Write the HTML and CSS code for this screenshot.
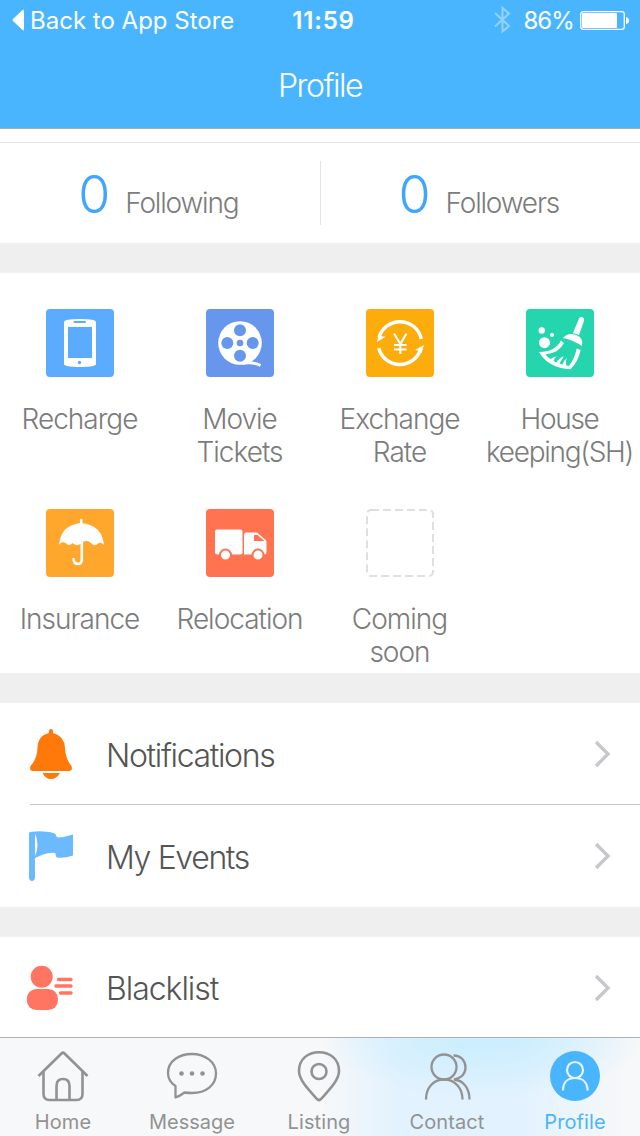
FILE: index.html
```html
<!DOCTYPE html>
<html lang="en">
<head>
    <meta charset="utf-8" />
    <title>Profile</title>
    <link rel="stylesheet" href="styles.css">
</head>
<body>
    <div class="screen">
        <header class="header">
            <div class="statusbar">
                <div class="back">
                    <svg width="13" height="22" viewBox="0 0 13 22"><path d="M11 0.5 Q12 0.5 12 2 V20 Q12 21.500 11 21.500 L1 12 Q0 11 1 10z" fill="#fff"/></svg>
                    <span>Back to App Store</span>
                </div>
                <div class="clock">11:59</div>
                <div class="power">
                    <svg width="17" height="28" viewBox="0 0 17 28"><path d="M1 7 L15 20 L8.500 25.500 V2 L15 7.500 L1 20.500" fill="none" stroke="#94d2ff" stroke-width="2"/></svg>
                    <span>86%</span>
                    <svg width="50" height="19" viewBox="0 0 50 19"><rect x="0.700" y="0.700" width="43.600" height="17.600" rx="2.500" fill="none" stroke="#fff" stroke-width="1.300"/><rect x="2" y="2" width="35" height="15" rx="1" fill="#fff"/><path d="M46 6 Q49 6.500 49 9.500 T46 13z" fill="#fff"/></svg>
                </div>
            </div>
            <h1 class="title">Profile</h1>
        </header>

        <!-- following / followers -->
        <section class="stats">
            <div class="stat"><span class="num">0</span><span class="statname">Following</span></div>
            <div class="stat"><span class="num">0</span><span class="statname">Followers</span></div>
        </section>

        <!-- services -->
        <section class="services">
            <div class="service">
                <svg class="tile blue" viewBox="0 0 68 68">
                    <path d="M18 13 Q18 10 34 10 T50 13 V55 Q50 58 34 58 T18 55z" fill="#fff"/>
                    <rect x="22" y="18" width="24" height="31" fill="#5babff"/>
                    <rect x="27.500" y="12" width="12.500" height="2" rx="1" fill="#5babff"/>
                    <circle cx="33.500" cy="53.500" r="1.700" fill="#5babff"/>
                </svg>
                <p>Recharge</p>
            </div>
            <div class="service">
                <svg class="tile indigo" viewBox="0 0 68 68">
                    <circle cx="34" cy="34" r="21.800" fill="#fff"/>
                    <path d="M36 54.300 Q47 52.500 54.500 56.500" fill="none" stroke="#fff" stroke-width="3"/>
                    <g fill="#6797ed"><circle cx="34" cy="21.300" r="6"/><circle cx="34" cy="46.700" r="6"/><circle cx="21.300" cy="34" r="6"/><circle cx="46.700" cy="34" r="6"/><circle cx="34" cy="34" r="3.300"/></g>
                </svg>
                <p>Movie<br>Tickets</p>
            </div>
            <div class="service">
                <svg class="tile yellow" viewBox="0 0 68 68">
                    <g fill="none" stroke="#fff" stroke-width="3.400"><path d="M13 28.500 A21.800 21.800 0 0 1 55.300 30"/><path d="M12.700 39 A21.800 21.800 0 0 0 55 39"/></g>
                    <path d="M13 24 L14.500 27 L19.500 27.700 L11 33z M58 36 L49 41 L53.500 42 L55 45z" fill="#fff"/>
                    <path d="M28 24.500 L34.300 35 L40.500 24.500 M34.300 34 V45 M28 36 H40.500 M28 40.500 H40.500" fill="none" stroke="#fff" stroke-width="2.100"/>
                </svg>
                <p>Exchange<br>Rate</p>
            </div>
            <div class="service">
                <svg class="tile green" viewBox="0 0 68 68">
                    <g fill="#fff">
                        <circle cx="15.700" cy="21.500" r="3.200"/><circle cx="26" cy="26" r="2.100"/><circle cx="18.500" cy="33.700" r="5.500"/>
                        <path d="M47 24 L53 9.500 Q55 7 57.500 9 Q58.500 10 58 12 L53 26z"/>
                        <path d="M37 29 Q42 23 50 26 T56 37 Q47 31 37 29z"/>
                        <path d="M35 31.500 Q29 43 13 43 Q22 59 44.500 60.300 Q52 53 54.700 41 L50.700 39.500 Q48.500 50 43 57 L40.500 56.500 Q39 53 41 49 Q38 51 36.500 55.500 L33.500 54.500 Q35 52 38 47 Q32 50 30.500 53.500 L27.500 52 Q28 50 30.500 47.500 Q27 48 24.500 50 Q21.500 48 19.500 45.500 Q33 44 38 34z"/>
                    </g>
                </svg>
                <p class="keeping">House<br>keeping(SH)</p>
            </div>
            <div class="service">
                <svg class="tile orange" viewBox="0 0 68 68">
                    <path d="M13 36 Q14.500 16 35.200 14 Q56 16 58 36 Q55 32 51.500 35 Q48.500 38 45 34 Q40 30 35.200 34.500 Q30 38 26.500 34 Q23 38 19.500 34 Q15 32 13 36z" fill="#fff"/>
                    <path d="M35.200 11 V16 M35.800 32 V51 Q35.500 55 32 55 Q28 55 27.500 50" fill="none" stroke="#fff" stroke-width="2.600" stroke-linecap="round"/>
                </svg>
                <p>Insurance</p>
            </div>
            <div class="service">
                <svg class="tile red" viewBox="0 0 68 68">
                    <rect x="9" y="20.500" width="27.500" height="25" rx="2" fill="#fff"/>
                    <path d="M38 26 Q38 23.500 40 23.500 H51 L58.500 30 Q60.500 31 60.500 33 V43 Q60.500 45.500 58 45.500 H38z" fill="#fff"/>
                    <path d="M48 26 H51.500 L58.500 32 H48z" fill="#ff7350"/>
                    <g fill="#fff" stroke="#ff7350" stroke-width="2"><circle cx="19.500" cy="46" r="5.500"/><circle cx="52" cy="46" r="5.500"/></g>
                </svg>
                <p>Relocation</p>
            </div>
            <div class="service">
                <svg class="tile" viewBox="0 0 68 68"><rect x="1" y="1" width="66" height="66" rx="4" fill="none" stroke="#dfdfdf" stroke-width="2" stroke-dasharray="8 4"/></svg>
                <p>Coming<br>soon</p>
            </div>
        </section>

        <section class="list">
            <div class="row">
                <svg class="rowicon" width="50" height="52" viewBox="0 0 50 52">
                    <path d="M23 5 V3 Q23 1 25 1 T27 3 V5 Q38.500 8 39 20 Q39.500 31 45.500 38 Q47 43 43.500 43 H6.500 Q3 43 4.500 38 Q11 31 11.500 20 Q11.500 8 23 5z M16.500 45 H34 Q30.500 51 25 51 T16.500 45z" fill="#ff780a"/>
                </svg>
                <span>Notifications</span>
                <svg class="arrow" width="18" height="28" viewBox="0 0 18 28"><path d="M2 2 L14 14 L2 26" fill="none" stroke="#c7c7cc" stroke-width="3.400"/></svg>
            </div>
            <div class="row divided">
                <svg class="rowicon" width="50" height="52" viewBox="0 0 50 52">
                    <path d="M3 3 Q3 1.200 14 1.200 Q28 2 29.500 4 Q30 7.500 33 7.500 Q39 7 47 4.500 V25.500 Q38 28.500 31 27.500 Q29.500 27 29.500 23 Q21 22 9 28 V48 Q8.500 51 6 51 T3 48z" fill="#6bbaff"/>
                    <path d="M9 3.500 Q14 15 9 26z" fill="#fff"/>
                </svg>
                <span>My Events</span>
                <svg class="arrow" width="18" height="28" viewBox="0 0 18 28"><path d="M2 2 L14 14 L2 26" fill="none" stroke="#c7c7cc" stroke-width="3.400"/></svg>
            </div>
        </section>

        <section class="list last">
            <div class="row">
                <svg class="rowicon" width="50" height="52" viewBox="0 0 50 52">
                    <g fill="#ff7562"><circle cx="15.700" cy="14.700" r="11"/><rect x="0.900" y="27" width="31" height="21" rx="9.500"/></g>
                    <path d="M32.500 17.500 H45 M30 24 H45 M34.500 31 H45" stroke="#ff7562" stroke-width="3.400" stroke-linecap="round"/>
                </svg>
                <span class="black">Blacklist</span>
                <svg class="arrow" width="18" height="28" viewBox="0 0 18 28"><path d="M2 2 L14 14 L2 26" fill="none" stroke="#c7c7cc" stroke-width="3.400"/></svg>
            </div>
        </section>

        <nav class="tabbar">
            <div class="tab">
                <svg width="52" height="52" viewBox="0 0 52 52"><g fill="none" stroke="#929292" stroke-width="2.600"><path d="M1.500 26 L24.500 3.500 Q26 2 27.500 3.500 L50.500 26"/><path d="M6.500 22 V44 Q6.500 50 12.500 50 H39.500 Q45.500 50 45.500 44 V22"/><path d="M19.500 50 V36 Q19.500 29 26 29 T32.500 36 V50"/></g></svg>
                <span>Home</span>
            </div>
            <div class="tab message">
                <svg width="52" height="52" viewBox="0 0 52 52"><path d="M9.500 36 Q2 31 2 23 C2 11 13 4 26 4 S50 12 50 23.500 S40 43 26 43 Q22 43 18.500 42.500 Q14 46 9.500 47.500z" fill="none" stroke="#929292" stroke-width="2.300" stroke-linejoin="round"/><g fill="#929292"><circle cx="15.500" cy="23.500" r="2.300"/><circle cx="26" cy="23.500" r="2.300"/><circle cx="36.500" cy="23.500" r="2.300"/></g></svg>
                <span>Message</span>
            </div>
            <div class="tab">
                <svg width="52" height="52" viewBox="0 0 52 52"><g fill="none" stroke="#929292" stroke-width="2.600"><path d="M6 21 C6 9 15 2.200 26 2.200 S46 9 46 21 C46 31 34 42 28 49 Q26 51 24 49 C18 42 6 31 6 21z"/><circle cx="26" cy="21.500" r="7.500"/></g></svg>
                <span>Listing</span>
            </div>
            <div class="tab">
                <svg width="52" height="52" viewBox="0 0 52 52"><g fill="none" stroke="#929292" stroke-width="2.300"><circle cx="23" cy="17" r="12.500"/><path d="M5 49.500 C5 38 12 29.500 23 29.500 S41.500 38 41.500 49.500"/><path d="M32.500 5.500 C40 5.500 44.500 11 44.500 17.500 Q44.500 27 33 29.500 C43 30.500 48.500 39 48.500 49.500"/></g></svg>
                <span>Contact</span>
            </div>
            <div class="tab active">
                <svg width="52" height="52" viewBox="0 0 52 52"><circle cx="26" cy="26" r="25" fill="#49b5ff"/><g fill="none" stroke="#e9f6ff" stroke-width="2.200"><circle cx="26" cy="20" r="8"/><path d="M14 40.500 C14 33 18 28 26 28 S38.500 33 38.500 40.500"/></g></svg>
                <span>Profile</span>
            </div>
        </nav>
    </div>
</body>
</html>
```

FILE: styles.css
```css
body{
    margin:0;
    background-color:#efefef;
    font-family:Inter, "Liberation Sans", sans-serif;
    font-weight:300;
}
svg{
    display:block;
    flex:none;
}
.screen{
    display:flex;
    flex-direction:column;
    width:640px;
    height:1136px;
    overflow:hidden;
}
.header{
    height:128px;
    background-color:#49b5ff;
    border-bottom:1px solid #a5adb3;
    color:#fff;
}
.statusbar{
    display:grid;
    grid-template-columns:1fr auto 1fr;
    align-items:center;
    height:40px;
    padding:0 10px 0 12px;
    font-size:24px;
    font-weight:400;
}
.back,.power{
    display:flex;
    align-items:center;
}
.back{
    gap:5px;
}
.clock{
    padding-left:5px;
    font-weight:600;
    letter-spacing:0.8px;
}
.power{
    justify-content:flex-end;
    gap:6px;
    letter-spacing:-0.9px;
}
.power span{
    margin-left:6px;
}
.title{
    margin:0;
    padding-top:1px;
    line-height:90px;
    text-align:center;
    font-size:32px;
    font-weight:300;
    letter-spacing:-1.5px;
}
.stats{
    display:flex;
    height:100px;
    margin-top:13px;
    border-top:1px solid #e3e3e3;
    background-color:#fff;
    box-shadow:0 -13px 0 #fff;
}
.stat{
    display:flex;
    flex:1;
    align-items:baseline;
    justify-content:center;
    gap:17px;
    height:64px;
    margin-top:18px;
    padding-right:3px;
    line-height:67px;
}
.stat + .stat{
    border-left:1px solid #e3e3e3;
}
.num{
    color:#40a5ff;
    font-size:52px;
    letter-spacing:-2px;
}
.statname{
    color:#7c7c7c;
    font-size:28px;
    letter-spacing:-1.2px;
}
.services{
    display:grid;
    grid-template-columns:repeat(4, 160px);
    grid-auto-rows:200px;
    height:400px;
    margin-top:30px;
    background-color:#fff;
}
.service{
    display:flex;
    flex-direction:column;
    align-items:center;
    padding-top:36px;
}
.service p{
    margin:26px 1px 0 0;
    text-align:center;
    color:#7c7c7c;
    font-size:28px;
    line-height:33px;
    letter-spacing:-1px;
}
.service .keeping{
    letter-spacing:-1.3px;
}
.tile{
    width:68px;
    height:68px;
    border-radius:4px;
}
.blue{
    background-color:#5babff;
}
.indigo{
    background-color:#6797ed;
}
.yellow{
    background-color:#fdad0b;
}
.green{
    background-color:#25d5ae;
}
.orange{
    background-color:#ffa72c;
}
.red{
    background-color:#ff7350;
}
.list{
    margin-top:30px;
    background-color:#fff;
}
.row{
    display:flex;
    align-items:center;
    height:101px;
    padding:0 28px 0 26px;
    color:#555;
    font-size:32px;
    letter-spacing:-1.35px;
}
.row span{
    flex:1;
    margin-left:30px;
    padding-top:3px;
}
.divided{
    height:102px;
    margin-left:30px;
    padding-left:0;
    border-top:1px solid #c8c8c8;
}
.divided .rowicon{
    margin-left:-4px;
}
.row .black{
    letter-spacing:-1.05px;
}
.last .row{
    height:100px;
}
.last svg{
    margin-top:2px;
}
.tabbar{
    display:flex;
    flex:1;
    border-top:1px solid #acb0b3;
    background:
        radial-gradient(ellipse 160px 60px at 485px 0, #cdeefe 20%, rgba(205,238,254,0) 100%),
        linear-gradient(to right, rgba(226,242,254,0) 320px, #e2f2fe 400px, #e2f2fe 520px, rgba(226,242,254,0) 630px),
        #f7f8f9;
}
.tab{
    display:flex;
    flex:1;
    flex-direction:column;
    align-items:center;
    gap:8px;
    margin-left:-1px;
    margin-right:1px;
    padding-top:12px;
    color:#929292;
    font-size:20px;
    font-weight:400;
    line-height:24px;
    letter-spacing:0.1px;
}
.message{
    margin-left:0;
    margin-right:0;
    letter-spacing:0;
}
.active{
    color:#49b5ff;
}
```
